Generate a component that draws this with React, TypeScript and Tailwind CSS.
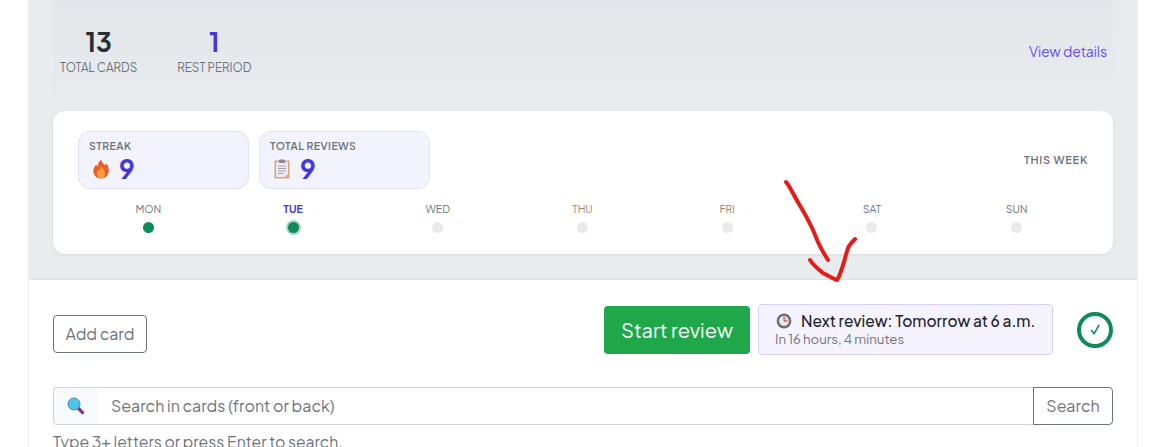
import React from "react";

const font = { fontFamily: '"Plus Jakarta Sans", Inter, "Liberation Sans", sans-serif' };

function Flame() {
  return (
    <svg width="16" height="20" viewBox="0 0 16 20" className="block">
      <path d="M8 0.500c.6 2.600 2.200 3.800 3.600 5.600 1.100-.3 1.500-1 1.600-1.900C14.900 6.200 15.800 8.500 15.800 11.500 15.800 16.300 12.400 19.500 8 19.500S.3 16.300.3 12C.3 9 2 7.300 3.300 5.500c.3 1 .7 1.600 1.400 1.900C5 4.600 6.200 2.300 8 .5z" fill="#e8602c" />
      <path d="M8.300 7c.4 1.900 3.600 4 3.600 7.400 0 2.900-1.800 5-3.900 5s-3.900-2-3.900-4.700c0-1.900 1.100-3 1.900-4.200.3.700.6 1.100 1.100 1.300C7 10 7.500 8.400 8.300 7z" fill="#f9a13a" />
    </svg>
  );
}

function Clipboard() {
  return (
    <svg width="16" height="20" viewBox="0 0 16 20" className="block">
      <rect x="0.500" y="1.500" width="15" height="18" rx="1" fill="#e0a078" />
      <rect x="2" y="3" width="12" height="15" fill="#eeeaf2" />
      <rect x="5" y="0.500" width="6" height="3.500" rx="0.800" fill="#8a8494" />
      <path d="M4 7h8M4 9.500h8M4 12h8M4 14.500h6" stroke="#a49fb0" strokeWidth="1" />
      <path d="M11 18l3-3v3z" fill="#e0a078" />
    </svg>
  );
}

function Magnifier() {
  return (
    <svg width="18" height="18" viewBox="0 0 18 18" className="block">
      <path d="M10.500 10.500l5 5" stroke="#7c3f8f" strokeWidth="3.200" strokeLinecap="round" />
      <circle cx="7" cy="7" r="6" fill="#4ec6e6" stroke="#3a8fb5" strokeWidth="1" />
    </svg>
  );
}

function ClockIcon() {
  return (
    <svg width="16" height="16" viewBox="0 0 16 16" className="block">
      <circle cx="8" cy="8" r="7.400" fill="#6f6c74" />
      <circle cx="8" cy="8" r="4.900" fill="#efe8e8" />
      <path d="M8 3.500V8h4.400A4.500 4.500 0 0 0 8 3.500z" fill="#f0c8cc" />
      <path d="M8 3.800V8h3.500" stroke="#8c4a4a" strokeWidth="1" fill="none" />
    </svg>
  );
}

const days = [
  { d: "MON", on: true, c: "text-[#6c757d]" },
  { d: "TUE", on: true, today: true, c: "text-[#4338e0] font-bold" },
  { d: "WED", c: "text-[#6c757d]" },
  { d: "THU", c: "text-[#a3866c]" },
  { d: "FRI", c: "text-[#a5796c]" },
  { d: "SAT", c: "text-[#6c757d]" },
  { d: "SUN", c: "text-[#6c757d]" },
];

function Stat({ value, label, color }: { value: string; label: string; color: string }) {
  return (
    <div className="flex flex-col items-center">
      <div className={`text-[26px] leading-[30px] font-bold ${color}`}>{value}</div>
      <div className="text-[11.700px] leading-[14px] mt-[4px] text-[#6c757d]">{label}</div>
    </div>
  );
}

function Pill({ label, value, icon }: { label: string; value: string; icon: React.ReactNode }) {
  return (
    <div className="w-[171px] h-[58px] rounded-[12px] border border-[#e0e0f8] bg-[#f3f3fd] pl-[10px] pt-[7px]">
      <div className="text-[10.500px] leading-[13px] font-semibold tracking-[0.42px] text-[#6c757d]">{label}</div>
      <div className="flex items-center gap-[10px] pl-[4px] mt-[2px]">
        {icon}
        <span className="text-[26px] leading-[30px] font-bold text-[#4338e0]">{value}</span>
      </div>
    </div>
  );
}

export default function App() {
  return (
    <div style={font} className="relative h-[447px] w-full overflow-hidden bg-white">
      <div className="ml-[28px] w-[1110px] h-[447px] border-x border-[#eceef0] overflow-hidden">
        <div className="h-[280px] bg-[#e9ecef] border-b border-[#dcdfe3] px-[24px]">
          <div className="h-[96px] flex items-center justify-between pl-[7px] pr-[6px] pt-[6px] bg-gradient-to-b from-[#e3e6ea] to-[#e8ebee]">
            <div className="flex gap-[40px]">
              <Stat value="13" label="TOTAL CARDS" color="text-[#2b2f33]" />
              <Stat value="1" label="REST PERIOD" color="text-[#4338e0]" />
            </div>
            <a className="text-[14px] tracking-[-0.1px] text-[#6450f0] mt-[1px]">View details</a>
          </div>
          <div className="mt-[15px] h-[143px] rounded-[12px] bg-white shadow-[0_1px_3px_rgba(0,0,0,0.08)] px-[25px] pt-[20px]">
            <div className="flex items-center justify-between">
              <div className="flex gap-[10px]">
                <Pill label="STREAK" value="9" icon={<Flame />} />
                <Pill label="TOTAL REVIEWS" value="9" icon={<Clipboard />} />
              </div>
              <div className="text-[11px] font-semibold tracking-[0.7px] text-[#6c757d]">THIS WEEK</div>
            </div>
            <div className="grid grid-cols-7 mt-[13px] ml-[-2px] mr-[-1px]">
              {days.map((x) => (
                <div key={x.d} className="flex flex-col items-center">
                  <div className={`text-[10.500px] leading-[14px] ${x.c}`}>{x.d}</div>
                  <div className="h-[11px] mt-[6px] flex items-center">
                    <div
                      className={`w-[11px] h-[11px] rounded-full ${x.on ? "bg-[#0f8a5a]" : "bg-[#e7e9ec]"} ${
                        x.today ? "shadow-[0_0_0_2px_#a8d5c2]" : ""
                      }`}
                    />
                  </div>
                </div>
              ))}
            </div>
          </div>
        </div>
        <div className="px-[24px] pt-[24px]">
          <div className="flex items-center h-[51px]">
            <button className="w-[94px] h-[38px] mt-[8px] rounded-[4px] border border-[#6c757d] text-[16px] text-[#6c757d]">
              Add card
            </button>
            <div className="flex-1" />
            <button className="w-[146px] h-[48px] mt-[1px] rounded-[4px] bg-[#1fa84a] text-white text-[20px]">
              Start review
            </button>
            <div className="ml-[8px] w-[295px] h-[51px] rounded-[4px] border border-[#d5d0f5] bg-[#f5f4fe] pl-[16px] pt-[6px]">
              <div className="flex items-center gap-[9px] pl-[1px]">
                <ClockIcon />
                <span className="text-[15.500px] leading-[20px] font-medium text-[#1f2430]">Next review: Tomorrow at 6 a.m.</span>
              </div>
              <div className="text-[13.200px] leading-[16px] text-[#6c757d]">In 16 hours, 4 minutes</div>
            </div>
            <div className="ml-[24px] w-[36px] h-[36px] rounded-full border-[4px] border-[#0f8a5a] flex items-center justify-center">
              <svg width="11" height="11" viewBox="0 0 12 12">
                <path d="M1.500 6.500l3 4L10 1" stroke="#0f8a5a" strokeWidth="1.700" fill="none" />
              </svg>
            </div>
          </div>
          <div className="flex h-[38px] mt-[32px]">
            <div className="w-[45px] flex items-center justify-center border border-r-0 border-[#ced4da] rounded-l-[4px] bg-[#f8f9fa]">
              <Magnifier />
            </div>
            <div className="flex-1 flex items-center border-y border-[#ced4da] pl-[13px] text-[16px] text-[#6c757d]">
              Search in cards (front or back)
            </div>
            <button className="w-[80px] border border-[#6c757d] rounded-r-[4px] text-[16px] text-[#6c757d]">Search</button>
          </div>
          <div className="text-[15.750px] leading-[20px] mt-[7px] text-[#6c757d]">Type 3+ letters or press Enter to search.</div>
        </div>
      </div>
      <svg className="absolute left-[775px] top-[175px] pointer-events-none" width="90" height="115" viewBox="775 175 90 115">
        <path d="M786 182c3 3 5 8 8 13 4 8 11 18 15 27 4 7 6 13 9 20 3 7 7 13 10 18" stroke="#e31e1a" strokeWidth="4" fill="none" strokeLinecap="round" />
        <path d="M810 260c3 5 8 9 13 13 4 2 10 6 14 7 3-4 5-12 7-18 2-7 3-12 5-16 2-3 4-5 6-7" stroke="#e31e1a" strokeWidth="4" fill="none" strokeLinecap="round" strokeLinejoin="round" />
      </svg>
    </div>
  );
}
